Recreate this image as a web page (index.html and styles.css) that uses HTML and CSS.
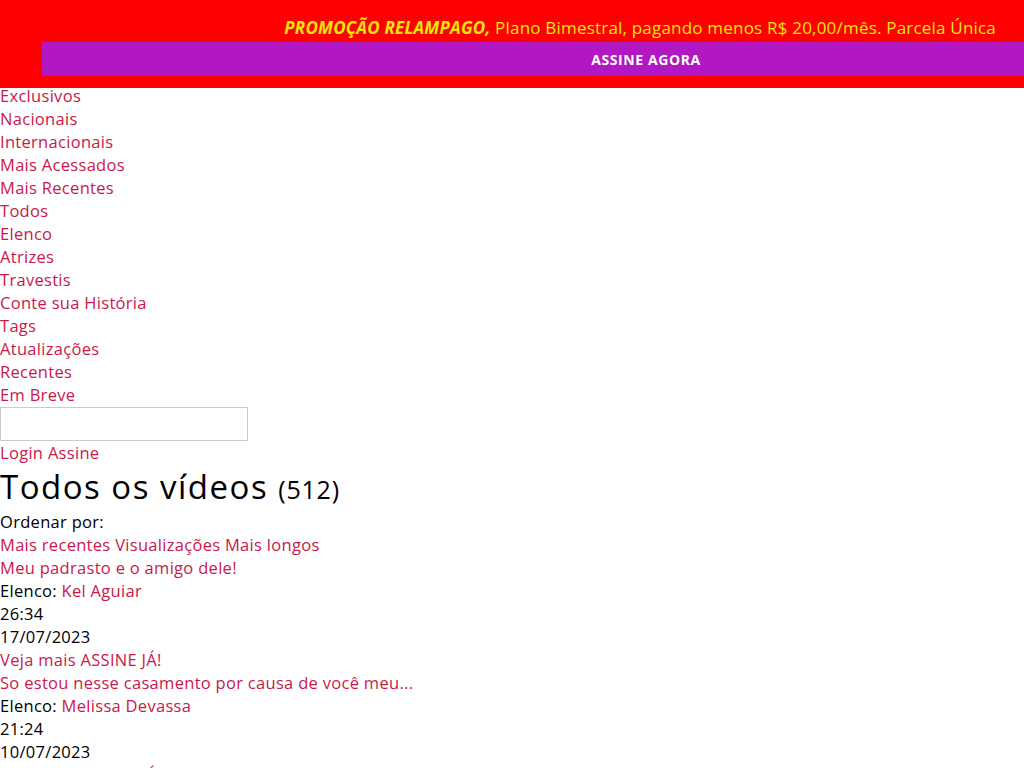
FILE: index.html
```html
<!DOCTYPE html>
<html lang="pt-BR">
<head>
<meta charset="utf-8">
<title>Todos os vídeos</title>
<link rel="stylesheet" href="styles.css">
</head>
<body>
<header class="topbar">
  <p class="promo"><em class="promo-hl">PROMOÇÃO RELAMPAGO,</em> Plano Bimestral, pagando menos R$ 20,00/mês. Parcela Única</p>
  <a class="cta" href="#">ASSINE AGORA</a>
</header>
<nav class="menu">
  <a href="#">Exclusivos</a>
  <a href="#">Nacionais</a>
  <a href="#">Internacionais</a>
  <a href="#">Mais Acessados</a>
  <a href="#">Mais Recentes</a>
  <a href="#">Todos</a>
  <a href="#">Elenco</a>
  <a href="#">Atrizes</a>
  <a href="#">Travestis</a>
  <a href="#">Conte sua História</a>
  <a href="#">Tags</a>
  <a href="#">Atualizações</a>
  <a href="#">Recentes</a>
  <a href="#">Em Breve</a>
</nav>
<input class="search" type="text">
<div class="account"><a href="#">Login</a> <a href="#">Assine</a></div>
<main>
  <h1 class="title">Todos os vídeos <span class="count">(512)</span></h1>
  <div class="sort-label">Ordenar por:</div>
  <div class="sort"><a href="#">Mais recentes</a> <a href="#">Visualizações</a> <a href="#">Mais longos</a></div>
  <div class="video">
    <a href="#">Meu padrasto e o amigo dele!</a>
    <div>Elenco: <a href="#">Kel Aguiar</a></div>
    <div>26:34</div>
    <div>17/07/2023</div>
    <a href="#">Veja mais ASSINE JÁ!</a>
  </div>
  <div class="video">
    <a href="#">So estou nesse casamento por causa de você meu...</a>
    <div>Elenco: <a href="#">Melissa Devassa</a></div>
    <div>21:24</div>
    <div>10/07/2023</div>
    <a href="#">Veja mais ASSINE JÁ!</a>
  </div>
</main>
</body>
</html>
```

FILE: styles.css
```css
html, body {
  margin: 0;
  padding: 0;
  background: #ffffff;
}
body {
  font-family: "Open Sans", "Noto Sans", sans-serif;
  font-size: 16.5px;
  line-height: 23px;
  letter-spacing: 0.3px;
  color: #000000;
}
a {
  color: #c9184a;
  text-decoration: none;
}
.topbar {
  background: #ff0000;
  height: 88px;
  display: flex;
  flex-direction: column;
  align-items: stretch;
}
.promo {
  flex: 0 0 42px;
  margin: 0;
  padding: 16px 28px 0 0;
  box-sizing: border-box;
  text-align: right;
  color: #f2e40c;
  font-size: 17px;
  line-height: 24px;
  letter-spacing: 0.2px;
  white-space: nowrap;
}
.promo-hl {
  font-weight: 700;
}
.cta {
  flex: 0 0 34px;
  margin-left: 42px;
  background: #b117c3;
  color: #ffffff;
  font-weight: 700;
  font-size: 14px;
  letter-spacing: 0.6px;
  display: flex;
  align-items: center;
  justify-content: center;
  padding-left: 226px;
}
.menu {
  margin-top: -4px;
  display: flex;
  flex-direction: column;
  align-items: flex-start;
}
.search {
  display: block;
  box-sizing: border-box;
  width: 248px;
  height: 34px;
  margin: 1px 0 0;
  border: 1px solid #cccccc;
  background: #fff;
}
.title {
  margin: 0;
  padding-top: 2px;
  font-size: 33px;
  line-height: 41px;
  font-weight: 500;
  letter-spacing: 1.5px;
}
.count {
  font-size: 25px;
  letter-spacing: 0.8px;
}
.video {
  display: flex;
  flex-direction: column;
  align-items: flex-start;
}
```
